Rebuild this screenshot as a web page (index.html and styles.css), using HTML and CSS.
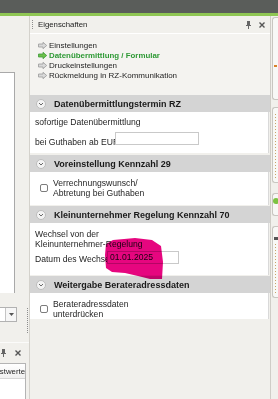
FILE: index.html
```html
<!DOCTYPE html>
<html>
<head>
<meta charset="utf-8">
<link rel="stylesheet" href="styles.css">
</head>
<body>
<div class="page">
  <div class="topbar"></div>
  <div class="greenline"></div>
  <div class="main">
    <div class="leftcol">
      <div class="lbox"></div>
      <div class="lcombo-row">
        <div class="lcombo">
          <div class="lcombo-field"></div>
          <div class="lcombo-btn"><svg width="5" height="3" viewBox="0 0 5 3"><polygon points="0,0 5,0 2.5,3" fill="#555"/></svg></div>
        </div>
        <div class="grip-v"></div>
      </div>
      <div class="lpanel">
        <div class="lpanel-head">
          <svg class="pin" width="5" height="8" viewBox="0 0 5 8"><rect x="1" y="0" width="3" height="4" fill="#666"/><rect x="0" y="4" width="5" height="1" fill="#666"/><rect x="2" y="5" width="1" height="3" fill="#666"/></svg>
          <svg class="xicon" width="6" height="6" viewBox="0 0 6 6"><path d="M0.5 0.5 L5.5 5.5 M5.5 0.5 L0.5 5.5" stroke="#555" stroke-width="1.4"/></svg>
        </div>
        <div class="lgrid">
          <div class="lgrid-head"><span>Festwerte</span></div>
        </div>
      </div>
    </div>
    <div class="props">
      <div class="props-head">
        <div class="grip-h"></div>
        <span class="props-title">Eigenschaften</span>
        <div class="head-icons">
          <svg width="5" height="8" viewBox="0 0 5 8"><rect x="1" y="0" width="3" height="4" fill="#666"/><rect x="0" y="4" width="5" height="1" fill="#666"/><rect x="2" y="5" width="1" height="3" fill="#666"/></svg>
          <svg width="6" height="6" viewBox="0 0 6 6"><path d="M0.5 0.5 L5.5 5.5 M5.5 0.5 L0.5 5.5" stroke="#555" stroke-width="1.4"/></svg>
        </div>
      </div>
      <ul class="links">
        <li class="link"><svg class="arrow" width="9" height="7" viewBox="0 0 9 7"><polygon points="0.5,2 5,2 5,0.3 8.7,3.5 5,6.7 5,5 0.5,5" fill="#d9d9d9" stroke="#9a9a9a" stroke-width="0.8"/></svg><span>Einstellungen</span></li>
        <li class="link link-active"><svg class="arrow" width="9" height="7" viewBox="0 0 9 7"><polygon points="0.5,2 5,2 5,0.3 8.7,3.5 5,6.7 5,5 0.5,5" fill="#6cc04a" stroke="#3f9a3a" stroke-width="0.8"/></svg><span>Datenübermittlung / Formular</span></li>
        <li class="link"><svg class="arrow" width="9" height="7" viewBox="0 0 9 7"><polygon points="0.5,2 5,2 5,0.3 8.7,3.5 5,6.7 5,5 0.5,5" fill="#d9d9d9" stroke="#9a9a9a" stroke-width="0.8"/></svg><span>Druckeinstellungen</span></li>
        <li class="link"><svg class="arrow" width="9" height="7" viewBox="0 0 9 7"><polygon points="0.5,2 5,2 5,0.3 8.7,3.5 5,6.7 5,5 0.5,5" fill="#d9d9d9" stroke="#9a9a9a" stroke-width="0.8"/></svg><span>Rückmeldung in RZ-Kommunikation</span></li>
      </ul>

      <div class="sec sec-1">
        <div class="sec-head"><svg class="chev" width="10" height="10" viewBox="0 0 10 10"><circle cx="5" cy="5" r="4.5" fill="#f3f3f3" stroke="#bdbdbd"/><polyline points="3,4 5,6 7,4" fill="none" stroke="#6a6a6a" stroke-width="1"/></svg><span>Datenübermittlungstermin RZ</span></div>
        <div class="sec-body body-1">
          <div class="row-text">sofortige Datenübermittlung</div>
          <div class="row-field">
            <span class="label label-eur">bei Guthaben ab EUR</span>
            <div class="input input-eur"></div>
          </div>
        </div>
      </div>

      <div class="sec sec-2">
        <div class="sec-head"><svg class="chev" width="10" height="10" viewBox="0 0 10 10"><circle cx="5" cy="5" r="4.5" fill="#f3f3f3" stroke="#bdbdbd"/><polyline points="3,4 5,6 7,4" fill="none" stroke="#6a6a6a" stroke-width="1"/></svg><span>Voreinstellung Kennzahl 29</span></div>
        <div class="sec-body body-2">
          <div class="check-row">
            <div class="checkbox"></div>
            <div class="check-text">Verrechnungswunsch/<br>Abtretung bei Guthaben</div>
          </div>
        </div>
      </div>

      <div class="sec sec-3">
        <div class="sec-head"><svg class="chev" width="10" height="10" viewBox="0 0 10 10"><circle cx="5" cy="5" r="4.5" fill="#f3f3f3" stroke="#bdbdbd"/><polyline points="3,4 5,6 7,4" fill="none" stroke="#6a6a6a" stroke-width="1"/></svg><span>Kleinunternehmer Regelung Kennzahl 70</span></div>
        <div class="sec-body body-3">
          <div class="text-lines">Wechsel von der<br>Kleinunternehmer-Regelung</div>
          <div class="row-field row-date">
            <span class="label label-date">Datum des Wechsels</span>
            <div class="input input-date">01.01.2025</div>
          </div>
        </div>
      </div>

      <div class="sec sec-4">
        <div class="sec-head"><svg class="chev" width="10" height="10" viewBox="0 0 10 10"><circle cx="5" cy="5" r="4.5" fill="#f3f3f3" stroke="#bdbdbd"/><polyline points="3,4 5,6 7,4" fill="none" stroke="#6a6a6a" stroke-width="1"/></svg><span>Weitergabe Berateradressdaten</span></div>
        <div class="sec-body body-4">
          <div class="check-row">
            <div class="checkbox"></div>
            <div class="check-text">Berateradressdaten<br>unterdrücken</div>
          </div>
        </div>
      </div>
    </div>
    <div class="strip">
      <div class="tab tab-1"><div class="mark mark-orange"></div></div>
      <div class="tab tab-2"><div class="dots dots-2"></div></div>
      <div class="tab tab-3"><div class="dot-green"></div></div>
      <div class="tab tab-4"><div class="mark mark-dark"></div><div class="dots dots-4"></div></div>
    </div>
  </div>
  <svg class="marker" width="278" height="399" viewBox="0 0 278 399"><path d="M106,244 L113,240 L135,238 L152,240 L161,246 L163,262 L162,279 L150,279 L138,276 L125,273 L112,272 L106,268 L105,255 Z" fill="#e6067f"/></svg>
</div>
</body>
</html>
```
FILE: styles.css
```css
* { box-sizing: border-box; margin: 0; padding: 0; }
html, body { width: 278px; height: 399px; overflow: hidden; }
body {
  background: #f1f0ec;
  font-family: "Liberation Sans", Arial, sans-serif;
  font-size: 8.6px;
  color: #1e1e1e;
}
.page { position: relative; width: 278px; height: 399px; display: flex; flex-direction: column; }
.topbar { height: 13px; background: #5a5d5a; }
.greenline { height: 3px; background: #8fc653; }
.main { flex: 1; display: flex; min-height: 0; }

/* left column */
.leftcol { width: 29px; display: flex; flex-direction: column; }
.lbox { margin-top: 56px; height: 221px; width: 15px; background: #fff; border-top: 1px solid #a9a9a9; border-right: 1px solid #a9a9a9; }
.lcombo-row { margin-top: 14px; height: 26px; display: flex; }
.lcombo { width: 17px; height: 15px; display: flex; background: #fff; border: 1px solid #b2b2b2; border-left: none; }
.lcombo-field { width: 6px; border-right: 1px solid #c4c4c4; }
.lcombo-btn { flex: 1; background: #f6f6f6; display: flex; align-items: center; justify-content: center; }
.grip-v { margin-left: 10px; margin-top: 1px; width: 1px; height: 25px; background: repeating-linear-gradient(#8c8c8c 0 1px, transparent 1px 2px); }
.lpanel { margin-top: 9px; flex: 1; display: flex; flex-direction: column; border-top: 1px solid #fbfbfa; }
.lpanel-head { height: 20px; display: flex; align-items: center; padding-left: 1px; gap: 9px; }
.lgrid { flex: 1; width: 26px; background: #fff; border-top: 1px solid #b4b4b4; border-right: 1px solid #b4b4b4; }
.lgrid-head { height: 15px; display: flex; justify-content: flex-end; align-items: center; overflow: hidden; white-space: nowrap; font-size: 7.8px; background: linear-gradient(#ffffff, #f0f0f0); border-bottom: 1px solid #d6d6d6; }

/* properties panel */
.props { width: 241px; border-left: 1px solid #d4d2cc; display: flex; flex-direction: column; }
.props-head { height: 18px; display: flex; align-items: center; padding-left: 2px; padding-right: 5px; border-bottom: 1px solid #ffffff; }
.grip-h { width: 1px; height: 9px; background: repeating-linear-gradient(#8c8c8c 0 1px, transparent 1px 2px); }
.props-title { margin-left: 5px; font-size: 7.8px; color: #222; }
.head-icons { margin-left: auto; display: flex; align-items: center; gap: 8px; }
.links { list-style: none; padding: 6px 0 15px 8px; background: #f4f3f0; }
.link { height: 10px; display: flex; align-items: center; gap: 2px; font-size: 8px; color: #1e1e1e; white-space: nowrap; }
.link-active { color: #2f9a36; font-weight: bold; font-size: 7.9px; }
.arrow { flex: none; }

.sec + .sec { margin-top: 1px; }
.sec-1 { margin-bottom: 1px; }
.sec-head { height: 17px; background: #d4d4d4; display: flex; align-items: center; padding-left: 6px; gap: 8px; font-weight: bold; font-size: 9px; color: #1a1a1a; white-space: nowrap; }
.chev { flex: none; }
.sec-body { background: #fff; padding-left: 5px; margin-right: 1px; border-right: 1px solid #d9d9d9; }
.body-1 { height: 41px; }
.body-2 { height: 33px; padding-top: 6px; }
.body-3 { height: 52px; padding-top: 6px; }
.body-4 { height: 26px; padding-top: 6px; }
.row-text { height: 20px; line-height: 20px; white-space: nowrap; }
.row-field { display: flex; align-items: flex-start; }
.label { white-space: nowrap; overflow: hidden; line-height: 10px; }
.label-eur { width: 80px; padding-top: 5px; }
.label-date { width: 72px; padding-top: 3px; }
.input { background: #fff; border: 1px solid #c9c9c9; height: 13px; line-height: 11px; padding-left: 2px; font-size: 8.6px; }
.input-eur { width: 84px; }
.input-date { width: 72px; }
.row-date { margin-top: 2px; }
.text-lines { line-height: 10px; white-space: nowrap; }
.check-row { display: flex; align-items: center; padding-left: 5px; gap: 5px; }
.checkbox { width: 8px; height: 8px; border: 1px solid #7c7c7c; border-radius: 2px; background: #fff; flex: none; }
.check-text { line-height: 10px; white-space: nowrap; }

/* right tab strip */
.strip { width: 8px; border-left: 1px solid #cfcdc7; padding-left: 1px; display: flex; flex-direction: column; }
.tab { border: 1px solid #c8c6c0; border-right: none; border-radius: 3px 0 0 3px; background: #f8f8f6; display: flex; flex-direction: column; align-items: center; }
.tab-1 { margin-top: 1px; height: 83px; }
.tab-2 { margin-top: 7px; height: 76px; }
.tab-3 { margin-top: 10px; height: 23px; }
.tab-4 { margin-top: 10px; height: 72px; }
.mark { width: 3px; height: 2px; }
.mark-orange { margin-top: 47px; background: #d9822b; }
.mark-dark { margin-top: 10px; background: #555; width: 4px; height: 3px; }
.dots { width: 1px; background: repeating-linear-gradient(#c9a46a 0 1px, transparent 1px 3px); }
.dots-2 { margin-top: 6px; height: 64px; }
.dots-4 { margin-top: 4px; height: 50px; }
.dot-green { margin-top: 4px; width: 6px; height: 6px; border-radius: 50%; background: #7dc243; }

/* highlighter scribble over the form */
.marker { position: absolute; left: 0; top: 0; pointer-events: none; mix-blend-mode: multiply; }
```
